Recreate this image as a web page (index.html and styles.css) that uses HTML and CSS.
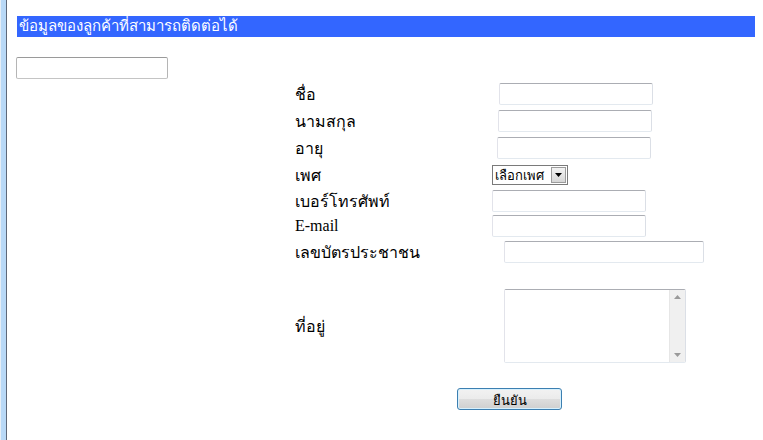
FILE: index.html
```html
<!DOCTYPE html>
<html lang="th">
<head>
    <meta charset="UTF-8">
    <meta name="viewport" content="width=device-width, initial-scale=1.0">
    <title>ข้อมูลลูกค้า</title>
    <link rel="stylesheet" href="styles.css">
</head>
<body>
    <div class="window">
        <div class="frame-edge"></div>
        <div class="page">
            <h1 class="title">ข้อมูลของลูกค้าที่สามารถติดต่อได้</h1>
            <input type="text" class="box search">

            <form class="customer-form">
                <div class="row">
                    <label class="label">ชื่อ</label>
                    <input type="text" class="box field shift-7">
                </div>
                <div class="row">
                    <label class="label">นามสกุล</label>
                    <input type="text" class="box field shift-6">
                </div>
                <div class="row row-28">
                    <label class="label">อายุ</label>
                    <input type="text" class="box field shift-5">
                </div>
                <div class="row row-26">
                    <label class="label">เพศ</label>
                    <span class="select-box">
                        <select class="select">
                            <option>เลือกเพศ</option>
                            <option>ชาย</option>
                            <option>หญิง</option>
                        </select>
                        <span class="select-arrow">
                            <svg width="7" height="4" viewBox="0 0 7 4"><path d="M0 0h7L3.5 4z" fill="#000"/></svg>
                        </span>
                    </span>
                </div>
                <div class="row row-25">
                    <label class="label serif">เบอร์โทรศัพท์</label>
                    <input type="text" class="box field">
                </div>
                <div class="row row-25">
                    <label class="label serif">E-mail</label>
                    <input type="text" class="box field">
                </div>
                <div class="row">
                    <label class="label serif">เลขบัตรประชาชน</label>
                    <input type="text" class="box field wide shift-12">
                </div>
                <div class="row row-address">
                    <label class="label">ที่อยู่</label>
                    <div class="box memo shift-12">
                        <textarea class="memo-text"></textarea>
                        <div class="scrollbar">
                            <svg width="7" height="4" viewBox="0 0 7 4"><path d="M0 4h7L3.5 0z" fill="#9a9a9a"/></svg>
                            <svg width="7" height="4" viewBox="0 0 7 4"><path d="M0 0h7L3.5 4z" fill="#9a9a9a"/></svg>
                        </div>
                    </div>
                </div>
                <div class="row row-button">
                    <button type="button" class="submit">ยืนยัน</button>
                </div>
            </form>
        </div>
    </div>
</body>
</html>
```

FILE: styles.css
```css
body {
    margin: 0;
    font-family: Tahoma, "DejaVu Sans", sans-serif;
    background-color: #fff;
    color: #000;
}
.window {
    display: flex;
    min-height: 440px;
}
.frame-edge {
    flex: none;
    width: 6px;
    background: linear-gradient(to right, #e6eef6 0, #e6eef6 1px, #b9d9f7 1px, #b9d9f7 100%);
    border-right: 1px solid #5e6878;
}
.page {
    flex: 1;
    padding-top: 16px;
}
.title {
    margin: 0 8px 0 10px;
    height: 21px;
    padding-left: 2px;
    background-color: #3366ff;
    color: #fff;
    font-size: 15px;
    font-weight: normal;
    line-height: 21px;
}
.box {
    box-sizing: border-box;
    border: 1px solid;
    border-color: #abadb3 #dbdfe6 #e3e9ef #e2e3ea;
    border-radius: 2px;
    background: #fff;
}
.search {
    display: block;
    width: 152px;
    height: 22px;
    margin: 20px 0 0 9px;
    border-color: #9a9a9a #b5b5b5 #c4c4c4 #b5b5b5;
}
.customer-form {
    margin: 1px 0 0 288px;
}
.row {
    display: flex;
    align-items: center;
    height: 27px;
}
.row-28 {
    height: 28px;
}
.row-26 {
    height: 26px;
}
.row-25 {
    height: 25px;
}
.row-address {
    height: 122px;
}
.row-button {
    height: 24px;
    padding-left: 162px;
}
.label {
    flex: none;
    width: 197px;
    padding-top: 1px;
    font-size: 16px;
}
.serif {
    font-family: "Liberation Serif", "Times New Roman", serif;
}
.field {
    width: 154px;
    height: 22px;
}
.wide {
    width: 200px;
}
.shift-5 {
    margin-left: 5px;
}
.shift-6 {
    margin-left: 6px;
}
.shift-7 {
    margin-left: 7px;
}
.shift-12 {
    margin-left: 12px;
}
.select-box {
    display: flex;
    align-items: stretch;
    width: 76px;
    height: 20px;
    box-sizing: border-box;
    border: 1px solid #7a7a7a;
    background: #fff;
}
.select {
    flex: 1;
    min-width: 0;
    padding: 0 0 0 2px;
    border: none;
    background: transparent;
    font-family: Tahoma, "DejaVu Sans", sans-serif;
    font-size: 13px;
    appearance: none;
    -webkit-appearance: none;
}
.select-arrow {
    flex: none;
    display: flex;
    align-items: center;
    justify-content: center;
    width: 15px;
    margin: 1px;
    border: 1px solid #9c9c9c;
    background: linear-gradient(#f3f3f3, #d6d6d6);
    box-sizing: border-box;
}
.memo {
    display: flex;
    width: 182px;
    height: 74px;
    overflow: hidden;
}
.memo-text {
    flex: 1;
    border: none;
    resize: none;
    outline: none;
}
.scrollbar {
    flex: none;
    display: flex;
    flex-direction: column;
    justify-content: space-between;
    align-items: center;
    width: 16px;
    padding: 5px 0;
    box-sizing: border-box;
    background: #f0f0f0;
    border-left: 1px solid #e6e6e6;
}
.submit {
    width: 105px;
    height: 22px;
    border: 1px solid #3c7fb1;
    border-radius: 3px;
    background: linear-gradient(#f2f2f2 0, #ebebeb 50%, #dddddd 51%, #cfcfcf 100%);
    box-shadow: inset 0 0 0 1px #d6f0fd;
    font-family: Tahoma, "DejaVu Sans", sans-serif;
    font-size: 13px;
    color: #000;
    cursor: pointer;
}
```
